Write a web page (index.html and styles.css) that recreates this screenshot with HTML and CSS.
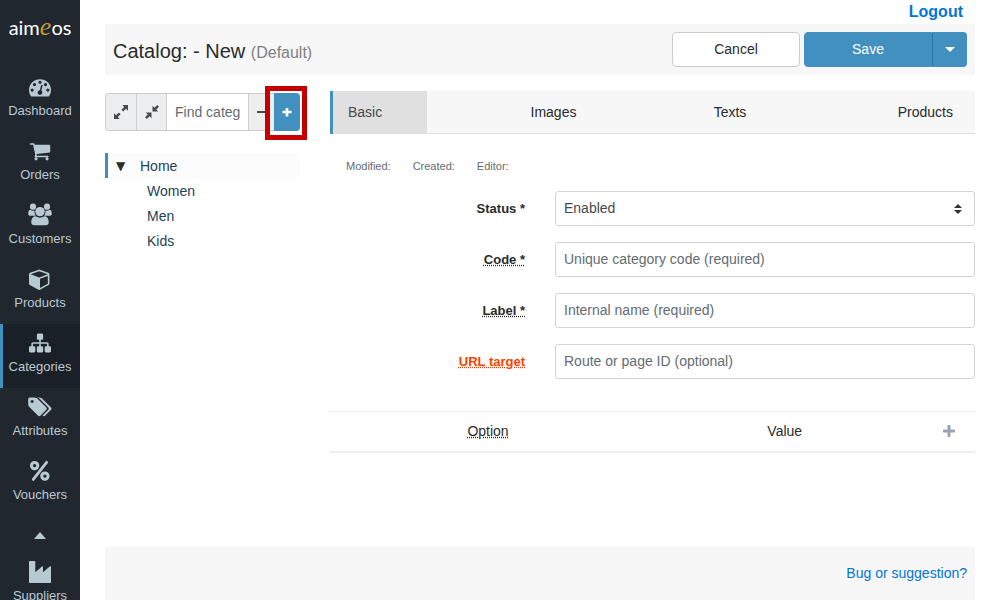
FILE: index.html
```html
<!DOCTYPE html>
<html lang="en">
<head>
<meta charset="utf-8">
<meta name="viewport" content="width=device-width, initial-scale=1">
<title>Catalog: - New</title>
<link rel="stylesheet" href="styles.css">
</head>
<body class="page">
<aside class="sidebar">
  <a class="logo" href="#">aim<span class="logo-accent">e</span>os</a>
  <nav class="menu">
    <a class="menu-item" href="#">
      <svg class="menu-icon" viewBox="0 0 1792 1792"><path d="M384 1152q0-53-37.5-90.5t-90.5-37.5-90.5 37.5-37.5 90.5 37.5 90.5 90.5 37.5 90.5-37.5 37.5-90.5zm192-448q0-53-37.5-90.5t-90.5-37.5-90.5 37.5-37.5 90.5 37.5 90.5 90.5 37.5 90.5-37.5 37.5-90.5zm428 481l101-382q6-26-7.5-48.5t-38.5-29.5-48 6.5-30 39.5l-101 382q-60 5-107 43.5t-63 98.5q-20 77 20 146t117 89 146-20 89-117q16-60-6-117t-72-91zm660-33q0-53-37.5-90.5t-90.5-37.5-90.5 37.5-37.5 90.5 37.5 90.5 90.5 37.5 90.5-37.5 37.5-90.5zm-640-640q0-53-37.5-90.5t-90.5-37.5-90.5 37.5-37.5 90.5 37.5 90.5 90.5 37.5 90.5-37.5 37.5-90.5zm448 192q0-53-37.5-90.5t-90.5-37.5-90.5 37.5-37.5 90.5 37.5 90.5 90.5 37.5 90.5-37.5 37.5-90.5zm320 448q0 261-141 483-19 29-54 29h-1402q-35 0-54-29-141-221-141-483 0-182 71-348t191-286 286-191 348-71 348 71 286 191 191 286 71 348z"/></svg>
      <span>Dashboard</span>
    </a>
    <a class="menu-item" href="#">
      <svg class="menu-icon" viewBox="0 0 1792 1792"><path d="M704 1536q0 52-38 90t-90 38-90-38-38-90 38-90 90-38 90 38 38 90zm896 0q0 52-38 90t-90 38-90-38-38-90 38-90 90-38 90 38 38 90zm128-1088v512q0 24-16.5 42.5t-40.5 21.5l-1044 122q13 60 13 70 0 16-24 64h920q26 0 45 19t19 45-19 45-45 19h-1024q-26 0-45-19t-19-45q0-11 8-31.5t16-36 21.5-40 15.5-29.5l-177-823h-204q-26 0-45-19t-19-45 19-45 45-19h256q16 0 28.5 6.5t19.5 15.5 13 24.5 8 26 5.5 29.5 4.5 26h1201q26 0 45 19t19 45z"/></svg>
      <span>Orders</span>
    </a>
    <a class="menu-item" href="#">
      <svg class="menu-icon menu-icon-wide" viewBox="0 0 24 22"><circle cx="5" cy="2.700" r="3.100"/><circle cx="19" cy="2.700" r="3.100"/><circle cx="12" cy="7.600" r="4.700"/><path d="M2.300 5.800C3.900 7.100 5.500 7 6.600 6.600 6.300 8.700 6.800 10.400 7.800 11.800H2.700C1 11.800.2 11 .2 9.700.2 8 .8 5.600 2.300 5.800zM21.700 5.800C20.100 7.100 18.500 7 17.400 6.600 17.700 8.700 17.200 10.400 16.200 11.800h5.100c1.700 0 2.500-.8 2.500-2.100 0-1.700-.6-4.100-2.100-3.900zM7.800 12.200c2.600 1.900 5.800 1.900 8.400 0 3.400-.2 4.500 3.300 4.500 6.100 0 1.800-1.100 2.900-3 2.900H6.300c-1.900 0-3-1.100-3-2.900 0-2.800 1.100-6.300 4.500-6.100z"/></svg>
      <span>Customers</span>
    </a>
    <a class="menu-item" href="#">
      <svg class="menu-icon" viewBox="0 0 1792 1792"><path d="M896 1629l640-349v-636l-640 233v752zm-64-865l698-254-698-254-698 254zm832-252v768q0 35-18 65t-49 47l-704 384q-28 16-61 16t-61-16l-704-384q-31-17-49-47t-18-65v-768q0-40 23-73t61-47l704-256q22-8 44-8t44 8l704 256q38 14 61 47t23 73z"/></svg>
      <span>Products</span>
    </a>
    <a class="menu-item menu-item-active" href="#" aria-current="page">
      <svg class="menu-icon" viewBox="0 0 1792 1792"><path d="M1792 1248v320q0 40-28 68t-68 28h-320q-40 0-68-28t-28-68v-320q0-40 28-68t68-28h96v-192h-512v192h96q40 0 68 28t28 68v320q0 40-28 68t-68 28h-320q-40 0-68-28t-28-68v-320q0-40 28-68t68-28h96v-192h-512v192h96q40 0 68 28t28 68v320q0 40-28 68t-68 28h-320q-40 0-68-28t-28-68v-320q0-40 28-68t68-28h96v-192q0-52 38-90t90-38h512v-192h-96q-40 0-68-28t-28-68v-320q0-40 28-68t68-28h320q40 0 68 28t28 68v320q0 40-28 68t-68 28h-96v192h512q52 0 90 38t38 90v192h96q40 0 68 28t28 68z"/></svg>
      <span>Categories</span>
    </a>
    <a class="menu-item" href="#">
      <svg class="menu-icon menu-icon-wide" viewBox="0 0 1920 1792"><path d="M448 448q0-53-37.5-90.5t-90.5-37.5-90.5 37.5-37.5 90.5 37.5 90.5 90.5 37.5 90.5-37.5 37.5-90.5zm1067 576q0 53-37 90l-491 492q-39 37-91 37-53 0-90-37l-715-716q-38-37-64.5-101t-26.5-117v-416q0-52 38-90t90-38h416q53 0 117 26.5t102 64.500l715 714q37 39 37 91zm384 0q0 53-37 90l-491 492q-39 37-91 37-36 0-59-14t-53-45l470-470q37-37 37-90 0-52-37-91l-715-714q-38-38-102-64.500t-117-26.500h224q53 0 117 26.500t102 64.500l715 714q37 39 37 91z"/></svg>
      <span>Attributes</span>
    </a>
    <a class="menu-item" href="#">
      <svg class="menu-icon" viewBox="0 0 22 22"><g fill="none" stroke="currentColor"><circle cx="5.600" cy="5.600" r="3.200" stroke-width="3"/><circle cx="15.900" cy="16.100" r="3.200" stroke-width="3"/><path d="M17.600 2.300L4.300 19.400" stroke-width="2.800" stroke-linecap="round"/></g></svg>
      <span>Vouchers</span>
    </a>
    <button class="menu-toggle" type="button" aria-label="Fewer entries"><svg class="menu-caret" viewBox="0 0 12 7"><path d="M0 7L6 0l6 7z"/></svg></button>
    <a class="menu-item" href="#">
      <svg class="menu-icon" viewBox="0 0 22 22"><path d="M.8 0h4.700q.8 0 .8.800v10.400L13.200 5.300q.8-.5.8.5v5.400L21 5.300q1-.5 1 .5V21.200q0 .8-.8.800H.8Q0 22 0 21.200V.8Q0 0 .8 0z"/></svg>
      <span>Suppliers</span>
    </a>
  </nav>
</aside>

<main class="main">
  <div class="topline"><a class="logout" href="#">Logout</a></div>
  <header class="header">
    <h1 class="title">Catalog: - New <span class="title-site">(Default)</span></h1>
    <div class="actions">
      <button class="btn btn-cancel" type="button">Cancel</button>
      <div class="btn-group">
        <button class="btn btn-save" type="submit" form="item">Save</button>
        <button class="btn btn-more" type="button" aria-label="More save actions"><svg class="btn-caret" viewBox="0 0 10 5"><path d="M0 0h10L5 5z"/></svg></button>
      </div>
    </div>
  </header>

  <div class="columns">
    <section class="tree-column">
      <div class="tree-bar">
        <button class="tree-btn tree-expand" type="button" aria-label="Expand all"><svg class="tree-icon" viewBox="0 0 14 14"><path d="M8.300 0H14v5.700L12 3.800 9.200 6.600 7.400 4.800 10.200 2zM0 8.300L2 10.200 4.800 7.400 6.600 9.200 3.800 12 5.700 14H0z"/></svg></button>
        <button class="tree-btn" type="button" aria-label="Collapse all"><svg class="tree-icon" viewBox="0 0 14 14"><path d="M7.500.8l2 1.900L12.200 0 14 1.800 11.300 4.500l1.900 2H7.500zM.8 7.500h5.700v5.700l-2-1.900L1.800 14 0 12.200 2.700 9.500z"/></svg></button>
        <input class="tree-search" type="text" placeholder="Find category" aria-label="Find category">
        <button class="tree-btn tree-remove" type="button" aria-label="Remove category"><svg class="tree-sign" viewBox="0 0 10 10"><path d="M0 4h10v2H0z"/></svg></button>
        <button class="tree-btn tree-add" type="button" aria-label="Add category"><svg class="tree-sign" viewBox="0 0 10 10"><path d="M3.700 1h2.600v2.700H9.500v2.600H6.300V9.500H3.700V6.300H.5V3.700h3.200z"/></svg></button>
      </div>
      <ul class="tree">
        <li>
          <div class="tree-node tree-node-active"><span class="tree-arrow">▼</span><a class="tree-link" href="#">Home</a></div>
          <ul class="tree tree-children">
            <li class="tree-node"><a class="tree-link" href="#">Women</a></li>
            <li class="tree-node"><a class="tree-link" href="#">Men</a></li>
            <li class="tree-node"><a class="tree-link" href="#">Kids</a></li>
          </ul>
        </li>
      </ul>
    </section>

    <section class="item-column">
      <nav class="tabs">
        <a class="tab tab-active" href="#">Basic</a>
        <a class="tab" href="#">Images</a>
        <a class="tab" href="#">Texts</a>
        <a class="tab tab-last" href="#">Products</a>
      </nav>
      <div class="meta"><span>Modified:</span><span>Created:</span><span>Editor:</span></div>
      <form class="form" id="item">
        <div class="row">
          <label class="label" for="status">Status *</label>
          <select class="field field-select" id="status"><option>Enabled</option><option>Disabled</option></select>
        </div>
        <div class="row">
          <label class="label" for="code"><span class="hint">Code *</span></label>
          <input class="field" id="code" type="text" placeholder="Unique category code (required)">
        </div>
        <div class="row">
          <label class="label" for="label"><span class="hint">Label *</span></label>
          <input class="field" id="label" type="text" placeholder="Internal name (required)">
        </div>
        <div class="row">
          <label class="label label-warn" for="target"><span class="hint">URL target</span></label>
          <input class="field" id="target" type="text" placeholder="Route or page ID (optional)">
        </div>
      </form>
      <table class="options">
        <thead>
          <tr>
            <th class="option-name"><span class="hint">Option</span></th>
            <th class="option-value">Value</th>
            <th class="option-action"><button class="option-add" type="button" aria-label="Add option"><svg class="option-plus" viewBox="0 0 12 12"><path d="M5.300 0h1.400q.8 0 .8.800v3.700h3.700q.8 0 .8.800v1.400q0 .8-.8.800H7.500v3.700q0 .8-.8.800H5.300q-.8 0-.8-.8V7.500H.8Q0 7.500 0 6.700V5.300q0-.8.8-.8h3.700V.8q0-.8.8-.8z"/></svg></button></th>
          </tr>
        </thead>
      </table>
    </section>
  </div>

  <footer class="footer"><a class="report" href="#">Bug or suggestion?</a></footer>
</main>
</body>
</html>
```
FILE: styles.css
```css
*, *::before, *::after { box-sizing: border-box; }

.page {
  display: flex;
  min-height: 100vh;
  margin: 0;
  background: #fff;
  color: #292b2c;
  font: 14px/24px "Liberation Sans", Arial, sans-serif;
}

a { color: inherit; text-decoration: none; }
button, input, select { font: inherit; color: inherit; margin: 0; }
button { cursor: pointer; }
svg { display: block; fill: currentColor; }

/* Sidebar */
.sidebar {
  position: sticky;
  top: 0;
  flex: 0 0 80px;
  height: 100vh;
  overflow: hidden;
  background: #20272f;
  color: #b8c9d2;
}
.logo {
  display: block;
  height: 68px;
  padding-top: 14px;
  color: #fff;
  font: 20px/26px Lato, "Open Sans", sans-serif;
  text-align: center;
}
.logo-accent {
  color: #c4983f;
  font-family: "Liberation Serif", serif;
  font-size: 26px;
  font-style: italic;
  line-height: 1;
}
.menu { display: flex; flex-direction: column; }
.menu-item {
  display: flex;
  flex-direction: column;
  align-items: center;
  height: 64px;
  padding-top: 8px;
  font-size: 13px;
  line-height: 26px;
}
.menu-item-active {
  background: #1a2027;
  box-shadow: inset 3px 0 #4190c0;
}
.menu-icon { flex: none; width: 22px; height: 22px; }
.menu-icon-wide { width: 24px; overflow: visible; }
.menu-toggle {
  display: flex;
  align-items: center;
  justify-content: center;
  height: 37px;
  padding: 2px 0 0;
  border: 0;
  background: none;
}
.menu-caret { width: 12px; height: 7px; }

/* Main area */
.main {
  display: flex;
  flex: 1;
  flex-direction: column;
  min-width: 0;
  padding: 0 25px;
}
.topline {
  padding-right: 12px;
  text-align: right;
}
.logout { color: #0275d8; font-size: 16px; font-weight: bold; }
.header {
  display: flex;
  align-items: center;
  justify-content: space-between;
  padding: 8px;
  background: #f7f7f7;
}
.title { margin: 0; padding-top: 5px; font-size: 20px; font-weight: normal; }
.title-site { color: #808080; font-size: 16px; }
.actions { display: flex; gap: 4px; }
.btn-group { display: flex; }
.btn {
  width: 128px;
  height: 35px;
  padding: 0 0 2px;
  border: 1px solid #ccc;
  border-radius: 4px;
  background: #fff;
}
.btn-save, .btn-more {
  border-color: #4190c0;
  background: #4190c0;
  color: #fff;
}
.btn-save { border-radius: 4px 0 0 4px; }
.btn-more {
  display: flex;
  align-items: center;
  justify-content: center;
  width: 35px;
  padding: 0;
  border-left-color: #2873a0;
  border-radius: 0 4px 4px 0;
}
.btn-caret { width: 10px; height: 5px; }
.columns {
  display: grid;
  grid-template-columns: 195fr 645fr;
  gap: 30px;
  padding: 16px 0 32px;
}
.tree-column, .item-column { min-width: 0; }

/* Category tree */
.tree-bar {
  position: relative;
  display: flex;
  height: 38px;
  margin: 2px 0 22px;
}
/* Highlight frame round the add button */
.tree-bar::after {
  content: "";
  position: absolute;
  top: -7px;
  right: -7px;
  width: 42px;
  height: 54px;
  border: 5px solid #c40000;
}
.tree-btn {
  display: flex;
  flex: 0 0 auto;
  align-items: center;
  justify-content: center;
  width: 30px;
  padding: 0;
  border: 1px solid #ccc;
  border-right-width: 0;
  background: #eceeef;
  color: #464a4c;
}
.tree-expand { width: 31px; border-radius: 4px 0 0 4px; }
.tree-icon { width: 14px; height: 14px; }
.tree-sign { width: 10px; height: 10px; }
.tree-search {
  flex: 1;
  min-width: 0;
  padding: 0 8px;
  border: 1px solid #ccc;
  border-right-width: 0;
  background: #fff;
}
::placeholder { color: #636c72; opacity: 1; }
.tree-remove { width: 26px; }
.tree-add {
  width: 26px;
  padding-right: 2px;
  border-color: #4190c0;
  border-radius: 0 4px 4px 0;
  background: #4190c0;
  color: #fff;
}
.tree { margin: 0; padding: 0; list-style: none; }
.tree-node {
  display: flex;
  align-items: center;
  height: 25px;
  color: #1d4258;
}
.tree-node-active {
  padding-left: 8px;
  border-left: 3px solid #4190c0;
  background: #fcfcfc;
}
.tree-arrow { width: 24px; color: #292b2c; font-family: "DejaVu Sans", sans-serif; font-size: 12px; }
.tree-children { padding-left: 42px; }

/* Tabs */
.tabs {
  display: grid;
  grid-template-columns: 97px 253fr 100fr 195fr;
  border-bottom: 1px solid #ddd;
  background: #f7f7f7;
}
.tab { padding: 9px 0; text-align: center; }
.tab-active {
  margin-bottom: -1px;
  padding: 9px 15px 10px;
  border-left: 3px solid #4190c0;
  background: #e0e0e0;
  color: #464a4c;
  text-align: left;
}
.tab-last { padding-right: 22px; text-align: right; }

/* Item form */
.meta {
  display: flex;
  gap: 22px;
  padding: 20px 16px 13px;
  color: #636c72;
  font-size: 11px;
}
.form { display: grid; gap: 16px; }
.row {
  display: grid;
  grid-template-columns: 195fr 420fr;
  gap: 30px;
  align-items: center;
}
.label { font-size: 13px; font-weight: bold; text-align: right; }
.label-warn { color: #ff4000; }
.hint { text-decoration: underline dotted; }
.field {
  width: 100%;
  height: 35px;
  padding: 0 8px 2px;
  border: 1px solid #d4d4d4;
  border-radius: 3px;
  background: #fff;
}
.field-select {
  appearance: none;
  background: #fff url("data:image/svg+xml,%3Csvg xmlns='http://www.w3.org/2000/svg' viewBox='0 0 8 10'%3E%3Cpath fill='%23333' d='M4 0l4 4H0zM4 10l4-4H0z'/%3E%3C/svg%3E") no-repeat right 12px center / 8px 10px;
  color: #464a4c;
}
.options {
  width: 100%;
  margin-top: 32px;
  border-top: 1px solid #eceeef;
  border-bottom: 2px solid #eceeef;
  border-spacing: 0;
  table-layout: fixed;
}
.options th { padding: 7px 0 8px; font-weight: normal; }
.option-name { width: 49%; }
.option-value { width: 43%; }
.option-add {
  display: flex;
  margin: 0 auto;
  padding: 0;
  border: 0;
  background: none;
  color: #9aa3b2;
}
.option-plus { width: 12px; height: 12px; }

.footer {
  margin-top: auto;
  padding: 14px 8px 15px;
  background: #f7f7f7;
  text-align: right;
}
.report { color: #0275d8; }
```
